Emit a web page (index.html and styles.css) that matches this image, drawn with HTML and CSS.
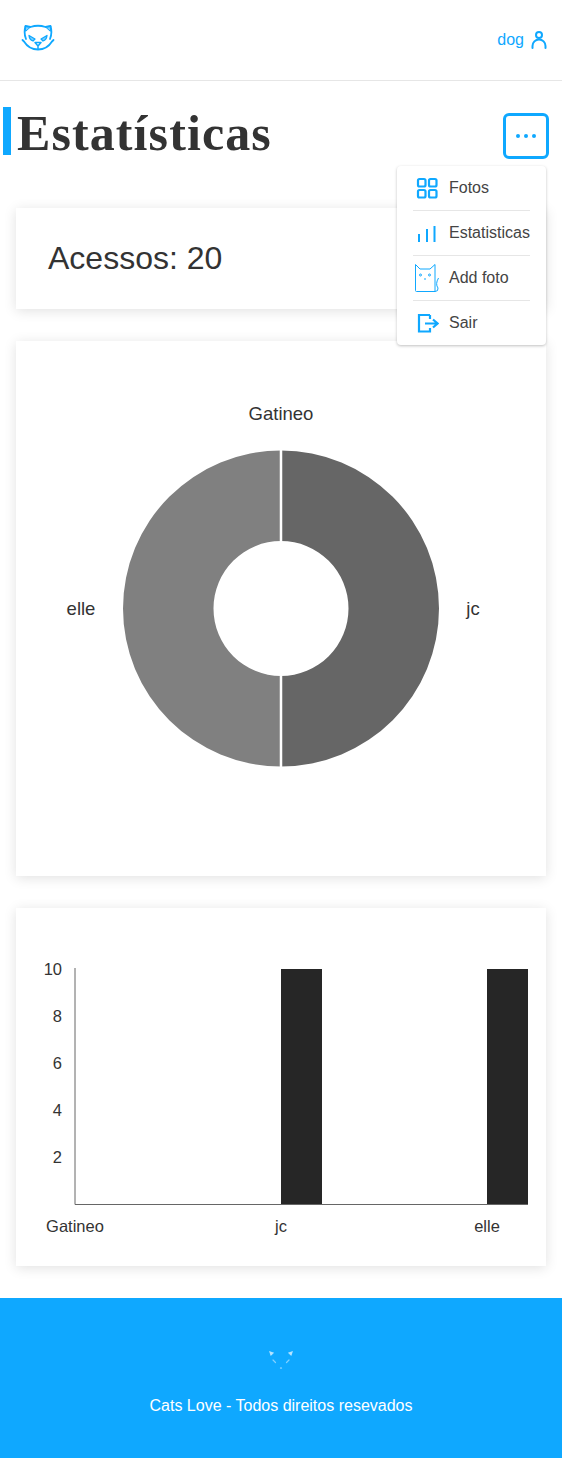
FILE: index.html
```html
<!DOCTYPE html>
<html lang="pt-BR">
<head>
  <meta charset="UTF-8">
  <meta name="viewport" content="width=device-width, initial-scale=1.0">
  <title>Estatísticas</title>
  <link rel="stylesheet" href="styles.css">
</head>
<body>
  <!-- Header -->
  <header class="header">
    <svg class="logo" viewBox="0 0 34 28" width="34" height="28" fill="none" stroke="#0fa8ff" stroke-width="1.800" stroke-linecap="round" stroke-linejoin="round">
      <path d="M5 15 Q2.500 9 4.500 2 L9.500 3 Q17 0.500 24.500 3 L29.500 2 Q31.500 9 29 15"/>
      <path d="M4.500 2 L9.500 3 L5 7 Z M29.500 2 L24.500 3 L29 7 Z" fill="#0fa8ff" fill-opacity=".55" stroke-width="1"/>
      <path d="M1.500 16 L3 17.500 Q8 25.500 17 25.500 Q26 25.500 31 17.500 L32.500 16"/>
      <path d="M8 11.500 L14 15 L12 17 Q8.500 16 8 11.500 Z M26 11.500 L20 15 L22 17 Q25.500 16 26 11.500 Z" fill="#0fa8ff" fill-opacity=".55" stroke-width="1.300"/>
      <path d="M14 18.500 H20 L17 22 Z M17 22 V25" stroke-width="1.500"/>
    </svg>
    <div class="user">
      <span>dog</span>
      <svg viewBox="0 0 16 18" width="16" height="18" fill="none" stroke="#0fa8ff" stroke-width="2" stroke-linecap="round">
        <circle cx="8" cy="4" r="3"/>
        <path d="M1.500 17 V15 A6.500 6.500 0 0 1 14.500 15 V17"/>
      </svg>
    </div>
  </header>

  <main class="main">
    <!-- Title -->
    <div class="title-row">
      <h1 class="title">Estatísticas</h1>
      <button class="menu-btn"><span></span><span></span><span></span></button>
    </div>

    <!-- Dropdown menu -->
    <nav class="menu">
      <a class="menu-item">
        <svg viewBox="0 0 24 24" width="24" height="24" fill="none" stroke="#0fa8ff" stroke-width="2.200">
          <rect x="3" y="3" width="7.500" height="7.500" rx="1.500"/>
          <rect x="14" y="3" width="7.500" height="7.500" rx="1.500"/>
          <rect x="3" y="14" width="7.500" height="7.500" rx="1.500"/>
          <rect x="14" y="14" width="7.500" height="7.500" rx="1.500"/>
        </svg>
        Fotos
      </a>
      <a class="menu-item">
        <svg viewBox="0 0 24 24" width="24" height="24" fill="none" stroke="#0fa8ff" stroke-width="2">
          <path d="M4 21 V13 M12 21 V8 M19.500 21 V5"/>
        </svg>
        Estatisticas
      </a>
      <a class="menu-item">
        <svg class="cat-icon" viewBox="0 0 24 28" width="24" height="28" fill="none" stroke="#0fa8ff" stroke-width="1">
          <path d="M0.500 0.500 L5 5 H15 L20 0.500 V27.500 H1.500 Q0.500 27.500 0.500 26.500 Z"/>
          <circle cx="5.500" cy="11" r="1"/>
          <circle cx="14.500" cy="11" r="1"/>
          <path d="M9 15 H11"/>
          <path d="M23.500 14 Q20 20 23 24 Q23.500 27.500 20 27.500"/>
        </svg>
        Add foto
      </a>
      <a class="menu-item">
        <svg viewBox="0 0 24 24" width="24" height="24" fill="none" stroke="#0fa8ff" stroke-width="2.200">
          <path d="M15 4 H4 V20.500 H15 V17"/>
          <path d="M15 4 V8 M10 12.500 H22 M18 8.500 L22.500 12.500 L18 16.500"/>
        </svg>
        Sair
      </a>
    </nav>

    <section class="card card-access">Acessos: 20</section>

    <!-- Donut chart -->
    <section class="card card-donut">
      <svg class="chart" viewBox="0 0 530 535" width="530" height="535">
        <path d="M265 109.500 A158 158 0 0 1 265 425.500 V335 A67.500 67.500 0 0 0 265 200 Z" fill="#666666"/>
        <path d="M265 109.500 A158 158 0 0 0 265 425.500 V335 A67.500 67.500 0 0 1 265 200 Z" fill="#808080"/>
        <path d="M265 109 V200 M265 335 V426" stroke="#fff" stroke-width="2.500"/>
        <text x="265" y="79" text-anchor="middle">Gatineo</text>
        <text x="65" y="274" text-anchor="middle">elle</text>
        <text x="457" y="274" text-anchor="middle">jc</text>
      </svg>
    </section>

    <!-- Bar chart -->
    <section class="card card-bars">
      <svg class="chart" viewBox="0 0 530 358" width="530" height="358">
        <g text-anchor="end">
          <text x="46" y="67">10</text>
          <text x="46" y="114">8</text>
          <text x="46" y="161">6</text>
          <text x="46" y="208">4</text>
          <text x="46" y="255">2</text>
        </g>
        <rect x="265" y="61" width="41" height="235" fill="#262626"/>
        <rect x="471" y="61" width="41" height="235" fill="#262626"/>
        <path d="M59 60 V296.500 H512" fill="none" stroke="#666" stroke-width="1"/>
        <g text-anchor="middle">
          <text x="59" y="324">Gatineo</text>
          <text x="265" y="324">jc</text>
          <text x="471" y="324">elle</text>
        </g>
      </svg>
    </section>
  </main>

  <!-- Footer -->
  <footer class="footer">
    <svg viewBox="0 0 34 28" width="34" height="28" fill="none" stroke="#b5e3ff" stroke-width="1.200" stroke-linecap="round">
      <path d="M6 7 L7 10 L9 8 Z M28 7 L27 10 L25 8 Z" fill="#b5e3ff"/>
      <path d="M9 15 L11.500 17.500 M25 15 L22.500 17.500" stroke-opacity=".7"/>
      <path d="M16.500 23 H17.500"/>
    </svg>
    <p>Cats Love - Todos direitos resevados</p>
  </footer>
</body>
</html>
```

FILE: styles.css
```css
* {
  box-sizing: border-box;
}

body {
  font-family: "Liberation Sans", Arial, sans-serif;
  margin: 0;
  background: #fff;
  color: #333;
}

/* Header */
.header {
  height: 81px;
  border-bottom: 1px solid #e6e6e6;
  display: flex;
  justify-content: space-between;
  align-items: flex-start;
  padding: 24px 15px 0 21px;
}

.user {
  display: flex;
  align-items: center;
  gap: 7px;
  margin-top: 7px;
  font-size: 16px;
  color: #0fa8ff;
}

/* Title */
.main {
  position: relative;
  padding: 26px 16px 32px;
}

.title-row {
  height: 101px;
  margin-left: -13px;
  display: flex;
  justify-content: space-between;
  align-items: flex-start;
  margin-right: -3px;
}

.title {
  margin: 0;
  height: 48px;
  padding-left: 6px;
  border-left: 8px solid #0fa8ff;
  font-family: "Liberation Serif", serif;
  font-size: 50px;
  line-height: 52px;
  font-weight: 700;
  letter-spacing: 1.1px;
  color: #333;
}

.menu-btn {
  width: 46px;
  height: 46px;
  margin-top: 6px;
  background: #fff;
  border: 3px solid #0fa8ff;
  border-radius: 6px;
  display: flex;
  justify-content: center;
  align-items: center;
  gap: 4px;
  padding: 0;
}

.menu-btn span {
  width: 4px;
  height: 4px;
  border-radius: 50%;
  background: #0fa8ff;
}

/* Dropdown */
.menu {
  position: absolute;
  top: 85px;
  right: 16px;
  width: 149px;
  height: 179px;
  padding: 0 16px;
  background: #fff;
  border-radius: 4px;
  box-shadow: 0 1px 3px rgba(0, 0, 0, 0.25);
  z-index: 2;
}

.menu-item {
  height: 45px;
  display: flex;
  align-items: center;
  gap: 10px;
  font-size: 16px;
  color: #444;
  white-space: nowrap;
  border-bottom: 1px solid #e6e6e6;
}

.menu-item:last-child {
  height: 44px;
  border-bottom: 1px solid transparent;
}

.menu-item svg {
  flex: none;
  margin-left: 2px;
}

/* Cards */
.card {
  background: #fff;
  box-shadow: 0 2px 12px rgba(0, 0, 0, 0.12);
  margin-bottom: 32px;
}

.card:last-child {
  margin-bottom: 0;
}

.card-access {
  height: 101px;
  padding: 30px 32px;
  font-size: 32px;
  line-height: 40px;
}

.card-donut {
  height: 535px;
}

.card-bars {
  height: 358px;
}

.chart {
  display: block;
}

.chart text {
  font-family: "Liberation Sans", Arial, sans-serif;
  font-size: 16.500px;
  fill: #333;
}

.card-donut .chart text {
  font-size: 18.500px;
}

/* Footer */
.footer {
  height: 160px;
  background: #0fa8ff;
  color: #fff;
  display: flex;
  flex-direction: column;
  align-items: center;
  padding-top: 47px;
}

.footer p {
  margin: 24px 0 0;
  font-size: 16px;
}
```
